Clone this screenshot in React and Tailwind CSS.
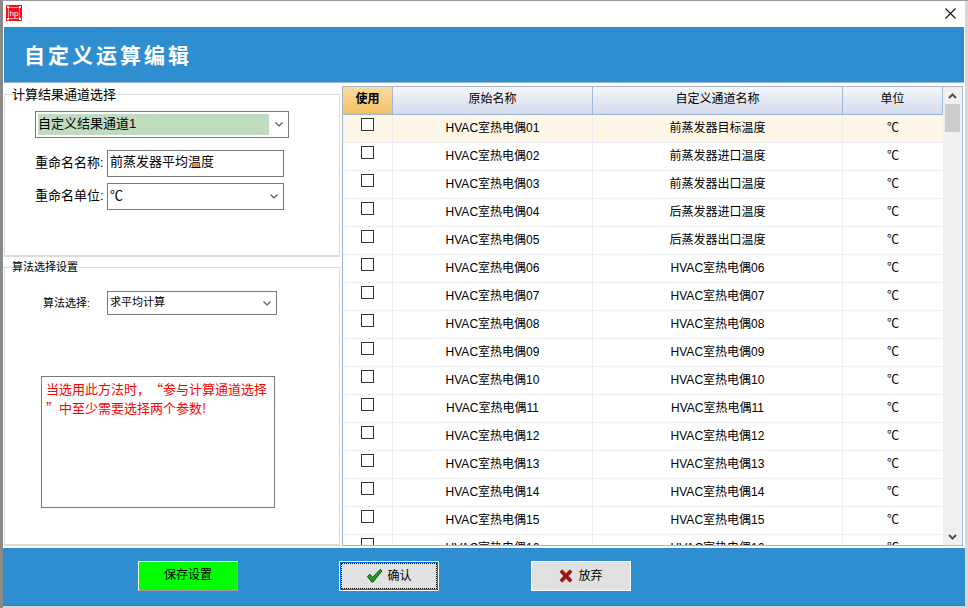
import React from "react";

const rowNames = [
  "前蒸发器目标温度",
  "前蒸发器进口温度",
  "前蒸发器出口温度",
  "后蒸发器进口温度",
  "后蒸发器出口温度",
];

const rows = Array.from({ length: 16 }, (_, i) => {
  const no = String(i + 1).padStart(2, "0");
  const name = "HVAC室热电偶" + no;
  return { name, alias: rowNames[i] || name };
});

function Chevron({ className }) {
  return (
    <svg width="8" height="5" viewBox="0 0 8 5" className={`shrink-0 ${className}`}>
      <path d="M0.5 0.5 L4 4 L7.5 0.5" fill="none" stroke="#555" strokeWidth="1.1" />
    </svg>
  );
}

function Combo({ className, iconClass, children }) {
  return (
    <div className={`flex items-center border border-[#7a7a7a] bg-white ${className}`}>
      <div className="min-w-0 flex-1">{children}</div>
      <Chevron className={iconClass} />
    </div>
  );
}

function HpLogo() {
  return (
    <svg width="16" height="16" viewBox="0 0 16 16" className="mb-[2px] ml-[1px]">
      <rect x="0" y="0" width="16" height="16" fill="#f4141e" />
      <rect x="2.5" y="2.5" width="11" height="11" fill="#e8101c" stroke="#ffb0b4" strokeWidth="0.8" />
      <rect x="1" y="1" width="2" height="2" fill="#fff" />
      <rect x="13" y="1" width="2" height="2" fill="#fff" />
      <rect x="1" y="13" width="2" height="2" fill="#fff" />
      <rect x="13" y="13" width="2" height="2" fill="#fff" />
      <text x="8" y="11" fontSize="8" fill="#fff" textAnchor="middle" fontFamily="Liberation Sans, sans-serif">hp</text>
    </svg>
  );
}

function Row({ row, active }) {
  return (
    <div className={`flex h-[28px] shrink-0 border-b border-[#eceef2] ${active ? "bg-[#fef6e6]" : "bg-white"}`}>
      <div className="flex w-[50px] justify-center border-r border-[#eceef2] pt-[3px]">
        <div className="h-[13px] w-[13px] border border-[#333] bg-white" />
      </div>
      <div className="flex w-[200px] items-center justify-center border-r border-[#eceef2] pb-[2px]">{row.name}</div>
      <div className="flex w-[250px] items-center justify-center border-r border-[#eceef2] pb-[2px]">{row.alias}</div>
      <div className="flex w-[100px] items-center justify-center pb-[2px]">℃</div>
    </div>
  );
}

export default function App() {
  return (
    <div className="h-[608px] w-[968px] overflow-hidden border-t border-l-[3px] border-t-[#999] border-l-[#8a8a8a] bg-[#d8d8d8] pr-[3px] pb-[2px] font-['Liberation_Sans','Noto_Sans_CJK_SC',sans-serif] text-[12px] text-black">
      <div className="flex h-full flex-col border-b border-[#707070] bg-white">
        {/* Title bar */}
        <div className="flex h-[26px] shrink-0 items-center justify-between pr-[9px] pl-[2px]">
          <HpLogo />
          <svg width="11" height="11" viewBox="0 0 11 11" className="mb-[1px]">
            <path d="M0.5 0.5 L10.5 10.5 M10.5 0.5 L0.5 10.5" stroke="#111" strokeWidth="1.1" />
          </svg>
        </div>

        {/* Blue header */}
        <div className="mr-[1px] ml-[1px] flex h-[56px] shrink-0 items-center border-b border-[#9db8cc] bg-[#2f8ecf] pl-[20px]">
          <span className="font-['Noto_Sans_CJK_SC',serif] text-[21px] font-bold tracking-[3px] text-white">
            自定义运算编辑
          </span>
        </div>

        {/* Body */}
        <div className="flex min-h-0 flex-1">
          {/* Left panel */}
          <div className="flex w-[337px] shrink-0 flex-col pt-[11px] pb-[2px] pl-[1px]">
            <div className="h-[163px] shrink-0 border border-b-2 border-[#dcdcdc]">
              <div className="-mt-[9px] ml-[7px] h-[17px] text-[13px] leading-[17px]">计算结果通道选择</div>
              <Combo className="mt-[8px] ml-[30px] h-[27px] w-[254px] pl-[2px]" iconClass="mr-[5px]">
                <div className="flex h-[21px] w-[231px] items-center bg-[#c0dcc0] pb-[1px] text-[13px]">自定义结果通道1</div>
              </Combo>
              <div className="mt-[12px] ml-[30px] flex h-[27px] items-center">
                <span className="w-[72px] pb-[2px] text-[13px]">重命名名称:</span>
                <div className="flex h-[27px] w-[177px] items-center border border-[#7a7a7a] pb-[3px] pl-[2px] text-[13px]">前蒸发器平均温度</div>
              </div>
              <div className="mt-[6px] ml-[30px] flex h-[27px] items-center">
                <span className="w-[72px] pb-[2px] text-[13px]">重命名单位:</span>
                <Combo className="h-[27px] w-[177px] pb-[1px] pl-[2px] text-[13px]" iconClass="mr-[5px] mt-[1px]">℃</Combo>
              </div>
            </div>

            <div className="mt-[10px] flex-1 border border-b-2 border-[#dcdcdc]">
              <div className="-mt-[9px] ml-[7px] h-[17px] text-[11px] leading-[17px]">算法选择设置</div>
              <div className="mt-[15px] flex h-[24px] items-center">
                <span className="ml-[38px] w-[64px] text-[11px]">算法选择:</span>
                <Combo className="h-[24px] w-[170px] pb-[2px] pl-[2px] text-[11px]" iconClass="mr-[5px] mt-[2px]">求平均计算</Combo>
              </div>
              <div className="mt-[61px] ml-[36px] h-[132px] w-[234px] border border-[#7a7a7a] pt-[2px] pl-[4px] font-['Noto_Sans_CJK_SC',sans-serif] text-[13px] leading-[19px] text-[#ff0000] [text-spacing-trim:space-all]">
                当选用此方法时，“参与计算通道选择
                <br />
                ”中至少需要选择两个参数!
              </div>
            </div>
          </div>

          {/* Channel grid */}
          <div className="mt-[3px] mr-[2px] mb-[2px] ml-[2px] flex min-w-0 flex-1 overflow-hidden border border-[#a3b5c8]">
            <div className="flex w-[600px] shrink-0 flex-col overflow-hidden">
              <div className="flex h-[28px] shrink-0 border-b border-[#9db9d6]">
                <div className="flex w-[50px] items-center justify-center border-r border-[#9db9d6] bg-gradient-to-b from-[#fbdc9e] to-[#f3bf62] pb-[3px] font-bold">使用</div>
                <div className="flex w-[200px] items-center justify-center border-r border-[#9db9d6] bg-gradient-to-b from-[#f5f7fa] to-[#d3daea] pb-[3px]">原始名称</div>
                <div className="flex w-[250px] items-center justify-center border-r border-[#9db9d6] bg-gradient-to-b from-[#f5f7fa] to-[#d3daea] pb-[3px]">自定义通道名称</div>
                <div className="flex w-[100px] items-center justify-center border-r border-[#9db9d6] bg-gradient-to-b from-[#f5f7fa] to-[#d3daea] pb-[3px]">单位</div>
              </div>
              {rows.map((row, i) => (
                <Row key={row.name} row={row} active={i === 0} />
              ))}
            </div>
            <div className="flex min-w-0 flex-1 flex-col items-center bg-[#f0f0f0]">
              <div className="flex h-[17px] items-center">
                <svg width="9" height="6" viewBox="0 0 9 6"><path d="M1 5 L4.5 1.5 L8 5" fill="none" stroke="#505050" strokeWidth="2" /></svg>
              </div>
              <div className="h-[28px] w-[15px] bg-[#cdcdcd]" />
              <div className="flex-1" />
              <div className="flex h-[17px] items-center">
                <svg width="9" height="6" viewBox="0 0 9 6"><path d="M1 1 L4.5 4.5 L8 1" fill="none" stroke="#505050" strokeWidth="2" /></svg>
              </div>
            </div>
          </div>
        </div>

        {/* Footer buttons */}
        <div className="flex h-[57px] shrink-0 items-start bg-[#2f8ecf] pt-[13px] text-[12px]">
          <button className="ml-[135px] flex h-[30px] w-[100px] items-center justify-center border border-t-white border-r-[#a0a0a0] border-b-[#a0a0a0] border-l-white bg-[#00ff00] pb-[2px]">
            保存设置
          </button>
          <button className="ml-[101px] h-[30px] w-[100px] border border-white bg-[#0078d7] p-[1px]">
            <span className="flex h-full w-full items-center justify-center gap-[4px] border border-dotted border-black bg-[#e1e1e1] pb-[1px]">
              <svg width="17" height="15" viewBox="0 0 18 16">
                <path d="M1.5 9 L4 6.5 L7 10 L15 1.5 L17 3 L7.5 15 L6 15 Z" fill="#1f9e1f" stroke="#0c4d0c" strokeWidth="1" strokeLinejoin="round" />
              </svg>
              确认
            </span>
          </button>
          <button className="ml-[92px] flex h-[30px] w-[100px] items-center justify-center gap-[5px] border border-white bg-[#e1e1e1] pb-[1px]">
            <svg width="14" height="14" viewBox="0 0 15 15">
              <path d="M1 3 L3.5 0.8 L7.5 5 L11.5 0.8 L14 3 L10 7.5 L14 12 L11.5 14.2 L7.5 10 L3.5 14.2 L1 12 L5 7.5 Z" fill="#a81010" stroke="#7a0808" strokeWidth="0.6" strokeLinejoin="round" />
            </svg>
            放弃
          </button>
        </div>
      </div>
    </div>
  );
}
